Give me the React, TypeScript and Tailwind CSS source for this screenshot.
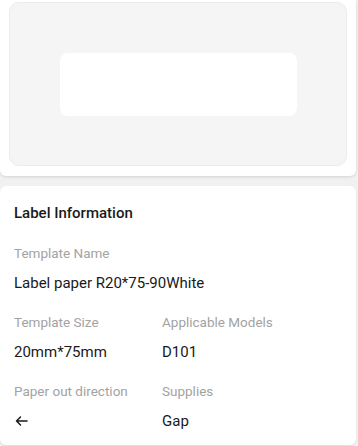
import React from "react";

function Field({ label, value }: { label: string; value: React.ReactNode }) {
  return (
    <div className="flex flex-col">
      <div className="text-[13.5px] leading-[20px] text-[#a3a3a3]">{label}</div>
      <div className="mt-[10px] text-[15px] leading-[20px] text-[#1a1a1a]">{value}</div>
    </div>
  );
}

export default function App() {
  return (
    <div className="w-[358px] h-[446px] bg-[#f1f1f1] overflow-hidden" style={{ fontFamily: "Roboto, 'Noto Sans', sans-serif" }}>
      <div className="w-[356px] bg-white rounded-b-[6px] shadow-[0_1px_3px_rgba(0,0,0,0.12)] pt-[2px] pb-[10px] px-[9px]">
        <div className="h-[164px] rounded-[10px] bg-[#f5f5f5] border border-[#ececec] flex items-center justify-center">
          <div className="w-[237px] h-[63px] bg-white rounded-[8px]" />
        </div>
      </div>
      <div className="mt-[10px] w-[356px] bg-white rounded-[6px] shadow-[0_1px_2px_rgba(0,0,0,0.1)] px-[14px] pt-[17px] pb-[14px]">
        <div className="text-[15px] leading-[20px] font-medium text-[#1a1a1a]">Label Information</div>
        <div className="mt-[20px]">
          <Field label="Template Name" value="Label paper R20*75-90White" />
        </div>
        <div className="mt-[19px] grid grid-cols-[148px_1fr] gap-y-[19px]">
          <Field label="Template Size" value="20mm*75mm" />
          <Field label="Applicable Models" value="D101" />
          <Field label="Paper out direction" value={
            <svg width="15" height="14" viewBox="0 0 15 14" className="mt-[3px]" fill="none" stroke="#1a1a1a" strokeWidth="1.5" strokeLinecap="round" strokeLinejoin="round">
              <path d="M13 7H2.5M6.5 3L2.5 7L6.5 11" />
            </svg>
          } />
          <Field label="Supplies" value="Gap" />
        </div>
      </div>
    </div>
  );
}
